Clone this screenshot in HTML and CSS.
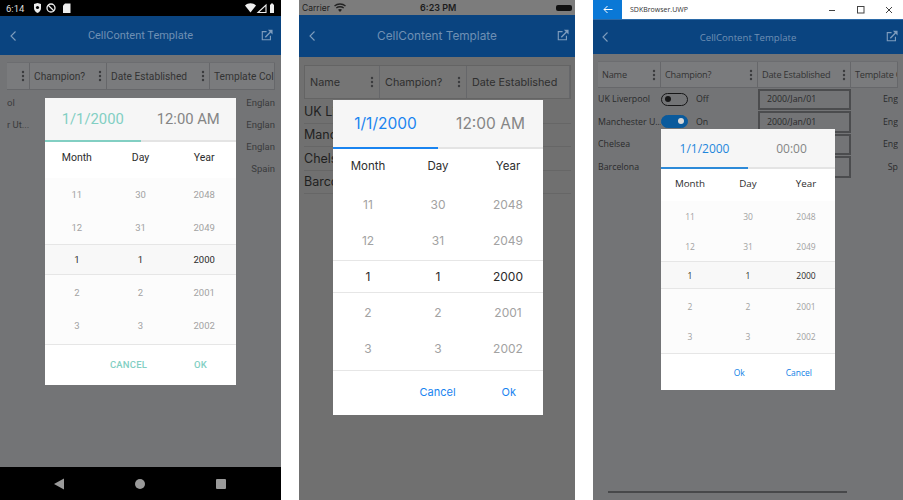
FILE: index.html
```html
<!DOCTYPE html>
<html lang="en">
<head>
<meta charset="utf-8">
<title>CellContent Template</title>
<link rel="stylesheet" href="styles.css">
</head>
<body>
<svg class="defs" aria-hidden="true">
  <symbol id="chev" viewBox="0 0 8 12"><path d="M6.500 1.500 2 6l4.500 4.500" fill="none" stroke="currentColor" stroke-width="1.100"/></symbol>
  <symbol id="ext" viewBox="0 0 14 14"><path d="M6.500 3H1.500v9.500H11V8" fill="none" stroke="currentColor" stroke-width="1.300"/><path d="M5 9.500 11 3.500" fill="none" stroke="currentColor" stroke-width="1.600"/><path d="M8 1h5.500v5.500z" fill="currentColor"/></symbol>
  <symbol id="dots" viewBox="0 0 4 12"><circle cx="2" cy="2" r="1.200" fill="currentColor"/><circle cx="2" cy="6" r="1.200" fill="currentColor"/><circle cx="2" cy="10" r="1.200" fill="currentColor"/></symbol>
</svg>

<section class="phone android">
  <div class="status">
    <span class="clock">6:14</span>
    <svg class="st" width="40" height="12" viewBox="0 0 40 12"><path d="M1 2l3.500-1L8 2v4c0 2.500-1.500 4-3.500 5C2.500 10 1 8.500 1 6z" fill="#eee"/><circle cx="4.500" cy="5.500" r="1.600" fill="#000"/><circle cx="18" cy="6" r="4" fill="none" stroke="#eee" stroke-width="1.300"/><path d="M15 3l6 6" stroke="#eee" stroke-width="1.300"/><path d="M32 1.500h5.500v9.500H30V3.500z" fill="#eee"/></svg>
    <span class="grow"></span>
    <svg class="st" width="31" height="12" viewBox="0 0 31 12"><path d="M0 3.500C3 .5 8 .5 11 3.500L5.500 10.500z" fill="#eee"/><path d="M21 3v7.500h-8z" fill="none" stroke="#eee" stroke-width="1.100"/><path d="M25 2.500h1v-1h2v1h1v8.500h-4z" fill="#eee"/></svg>
  </div>
  <header class="nav">
    <svg class="chev"><use href="#chev"/></svg>
    <span class="title">CellContent Template</span>
    <svg class="ext"><use href="#ext"/></svg>
  </header>
  <main class="content">
    <div class="row head">
      <div class="cell"><span class="grow"></span><svg class="dots"><use href="#dots"/></svg></div>
      <div class="cell">Champion?<span class="grow"></span><svg class="dots"><use href="#dots"/></svg></div>
      <div class="cell">Date Established<span class="grow"></span><svg class="dots"><use href="#dots"/></svg></div>
      <div class="cell">Template Col</div>
    </div>
    <div class="row data"><span class="tail">ol</span><span></span><span></span><span class="r">Englan</span></div>
    <div class="row data"><span class="tail">r Ut...</span><span></span><span></span><span class="r">Englan</span></div>
    <div class="row data"><span></span><span></span><span></span><span class="r">Englan</span></div>
    <div class="row data"><span></span><span></span><span></span><span class="r">Spain</span></div>
  </main>
  <footer class="softkeys">
    <svg width="12" height="14" viewBox="0 0 12 14"><path d="M11 1.500v11L1 7z" fill="#9a9a9a"/></svg>
    <svg width="12" height="12" viewBox="0 0 12 12"><circle cx="6" cy="6" r="5" fill="#9a9a9a"/></svg>
    <svg width="12" height="12" viewBox="0 0 12 12"><rect x="1" y="1" width="10" height="10" rx="1" fill="#9a9a9a"/></svg>
  </footer>
  <div class="dialog">
    <div class="tabs"><span class="on">1/1/2000</span><span>12:00 AM</span></div>
    <div class="bar"><i></i></div>
    <div class="cols labels"><span>Month</span><span>Day</span><span>Year</span></div>
    <div class="picker">
      <div class="cols"><span>11</span><span>30</span><span>2048</span></div>
      <div class="cols"><span>12</span><span>31</span><span>2049</span></div>
      <div class="cols sel"><span>1</span><span>1</span><span>2000</span></div>
      <div class="cols"><span>2</span><span>2</span><span>2001</span></div>
      <div class="cols"><span>3</span><span>3</span><span>2002</span></div>
    </div>
    <div class="actions"><span>CANCEL</span><span>OK</span></div>
  </div>
</section>

<section class="phone ios">
  <div class="status">
    <span>Carrier</span>
    <svg class="st wifi" width="12" height="9" viewBox="0 0 12 9"><path d="M.5 3C3.500.3 8.500.3 11.500 3M2.300 5c2-1.700 5.400-1.700 7.400 0" fill="none" stroke="#222" stroke-width="1.300"/><path d="M4 6.700c1.200-.8 2.800-.8 4 0L6 9z" fill="#222"/></svg>
    <span class="time">6:23 PM</span>
    <span class="batt"></span>
  </div>
  <header class="nav">
    <svg class="chev"><use href="#chev"/></svg>
    <span class="title">CellContent Template</span>
    <svg class="ext"><use href="#ext"/></svg>
  </header>
  <main class="content">
    <div class="row head">
      <div class="cell">Name<span class="grow"></span><svg class="dots"><use href="#dots"/></svg></div>
      <div class="cell">Champion?<span class="grow"></span><svg class="dots"><use href="#dots"/></svg></div>
      <div class="cell">Date Established</div>
    </div>
    <div class="row data"><span>UK Li</span></div>
    <div class="row data"><span>Manc</span></div>
    <div class="row data"><span>Chels</span></div>
    <div class="row data"><span>Barco</span></div>
  </main>
  <div class="dialog">
    <div class="tabs"><span class="on">1/1/2000</span><span>12:00 AM</span></div>
    <div class="bar"><i></i></div>
    <div class="cols labels"><span>Month</span><span>Day</span><span>Year</span></div>
    <div class="picker">
      <div class="cols"><span>11</span><span>30</span><span>2048</span></div>
      <div class="cols"><span>12</span><span>31</span><span>2049</span></div>
      <div class="cols sel"><span>1</span><span>1</span><span>2000</span></div>
      <div class="cols"><span>2</span><span>2</span><span>2001</span></div>
      <div class="cols"><span>3</span><span>3</span><span>2002</span></div>
    </div>
    <div class="actions"><span>Cancel</span><span>Ok</span></div>
  </div>
</section>

<section class="phone uwp">
  <div class="status">
    <span class="back"><svg width="10" height="9" viewBox="0 0 10 9"><path d="M9.500 4.500H1M4.500 1 1 4.500 4.500 8" fill="none" stroke="#fff" stroke-width="1"/></svg></span>
    <span class="app">SDKBrowser.UWP</span>
    <span class="grow"></span>
    <span class="winbtns">
      <svg width="8" height="8" viewBox="0 0 8 8"><path d="M1 4.500h6" stroke="#444"/></svg>
      <svg width="8" height="8" viewBox="0 0 8 8"><rect x=".5" y=".5" width="6.500" height="6.500" fill="none" stroke="#444"/></svg>
      <svg width="8" height="8" viewBox="0 0 8 8"><path d="M1 1l6 6M7 1 1 7" stroke="#444"/></svg>
    </span>
  </div>
  <header class="nav">
    <svg class="chev"><use href="#chev"/></svg>
    <span class="title">CellContent Template</span>
    <svg class="ext"><use href="#ext"/></svg>
  </header>
  <main class="content">
    <div class="row head">
      <div class="cell">Name<span class="grow"></span><svg class="dots"><use href="#dots"/></svg></div>
      <div class="cell">Champion?<span class="grow"></span><svg class="dots"><use href="#dots"/></svg></div>
      <div class="cell">Date Established<span class="grow"></span><svg class="dots"><use href="#dots"/></svg></div>
      <div class="cell">Template C</div>
    </div>
    <div class="row data">
      <span>UK Liverpool</span>
      <span class="toggle"><i class="sw"></i>Off</span>
      <span class="date">2000/Jan/01</span>
      <span class="r">Eng</span>
    </div>
    <div class="row data">
      <span>Manchester U...</span>
      <span class="toggle"><i class="sw onsw"></i>On</span>
      <span class="date">2000/Jan/01</span>
      <span class="r">Eng</span>
    </div>
    <div class="row data"><span>Chelsea</span><span></span><span class="date"></span><span class="r">Eng</span></div>
    <div class="row data"><span>Barcelona</span><span></span><span class="date"></span><span class="r">Sp</span></div>
    <span class="grow"></span>
    <div class="scroll"></div>
  </main>
  <div class="dialog">
    <div class="tabs"><span class="on">1/1/2000</span><span>00:00</span></div>
    <div class="bar"><i></i></div>
    <div class="cols labels"><span>Month</span><span>Day</span><span>Year</span></div>
    <div class="picker">
      <div class="cols"><span>11</span><span>30</span><span>2048</span></div>
      <div class="cols"><span>12</span><span>31</span><span>2049</span></div>
      <div class="cols sel"><span>1</span><span>1</span><span>2000</span></div>
      <div class="cols"><span>2</span><span>2</span><span>2001</span></div>
      <div class="cols"><span>3</span><span>3</span><span>2002</span></div>
    </div>
    <div class="actions"><span>Ok</span><span>Cancel</span></div>
  </div>
</section>
</body>
</html>
```
FILE: styles.css
```css
* { box-sizing: border-box; }
html, body { margin: 0; height: 100%; }
body { display: flex; width: 903px; height: 500px; background: #fff; overflow: hidden; font-family: Roboto, sans-serif; }
.defs { position: absolute; width: 0; height: 0; }
.grow { flex: 1; }

.phone { position: relative; display: flex; flex-direction: column; height: 500px; overflow: hidden; background: #737476; color: #2c2d2e; }
.android { width: 281px; font-family: Roboto, sans-serif; }
.ios { width: 276px; margin-left: 18px; background: #707070; font-family: Inter, "Liberation Sans", sans-serif; }
.uwp { width: 310px; margin-left: 18px; font-family: "Open Sans", sans-serif; }

/* status bars */
.status { display: flex; align-items: center; flex: none; }
.android .status { height: 16px; background: #000; color: #ddd; font-size: 9.500px; padding: 0 5px 0 6px; }
.android .clock { margin-right: 9px; }
.ios .status { position: relative; height: 15px; background: #7c7c7c; color: #1c1c1c; font-size: 8.500px; padding: 0 4px 0 3px; }
.ios .wifi { margin-left: 4px; }
.ios .time { position: absolute; left: 121px; font-size: 9px; font-weight: 600; }
.ios .batt { position: absolute; right: 3px; width: 16px; height: 6px; border-radius: 2px; background: #111; }
.uwp .status { height: 19px; background: #fff; color: #333; font-size: 7px; }
.back { display: flex; align-items: center; justify-content: center; width: 29px; height: 19px; background: #0a78d6; }
.app { margin-left: 8px; }
.winbtns { display: flex; gap: 20.500px; padding-right: 10px; }

/* app bar */
.nav { position: relative; display: flex; align-items: center; justify-content: center; flex: none; background: #0a4480; color: #6f90b4; }
.android .nav { height: 39px; font-size: 11px; }
.ios .nav { height: 42px; font-size: 11.800px; }
.uwp .nav { height: 35px; font-size: 9.600px; border-top: 1px solid #2b6aa8; }
.chev { position: absolute; left: 9px; top: 50%; width: 8px; height: 12px; margin-top: -6px; color: #7f9dbd; }
.ext { position: absolute; right: 8px; top: 50%; width: 12px; height: 12px; margin-top: -7px; color: #7f9dbd; }
.ios .ext { right: 6px; }
.uwp .chev { left: 8px; }
.uwp .ext { right: 5px; }

/* grid behind the dialog */
.content { flex: 1; display: flex; flex-direction: column; min-height: 0; overflow: hidden; }
.android .content { padding: 7px 6px 0 7px; }
.ios .content { padding: 8px 4px 0 5px; }
.uwp .content { padding: 7px 5px 7px 5px; }
.row { display: grid; flex: none; }
.android .row { grid-template-columns: 23px 77px 103px 65px; }
.ios .row { grid-template-columns: 75px 87px 1fr; }
.uwp .row { grid-template-columns: 63px 97px 93px 47px; }
.head { background: #7a7b7d; }
.cell { display: flex; align-items: center; min-width: 0; overflow: hidden; white-space: nowrap; border-right: 1px solid #66676a; }
.android .head { height: 28px; font-size: 10.200px; border-top: 1px solid #6c6d70; border-bottom: 1px solid #66676a; color: #333; }
.android .cell { padding: 0 4px; }
.ios .head { height: 34px; font-size: 10.800px; border: 1px solid #646464; color: #2f2f2f; background: #757575; }
.ios .cell { padding: 0 5px; }
.uwp .head { height: 27px; font-size: 9.200px; border-bottom: 1px solid #66676a; border-top: 1px solid #6c6d70; color: #333; letter-spacing: -.2px; }
.uwp .cell { padding: 0 4px; }
.dots { flex: none; width: 4px; height: 12px; color: #3b3c3e; }

.data { white-space: nowrap; }
.data span { min-width: 0; overflow: hidden; }
.r { text-align: right; }
.android .data { height: 22px; align-items: center; font-size: 9.500px; color: #3a3b3d; }
.android .data:nth-child(2) { margin-top: 1px; }
.ios .data { height: 23.500px; align-items: center; font-size: 12.500px; color: #1f1f1f; border-bottom: 1px solid #666; }
.ios .data:nth-child(2) { margin-top: 1px; }
.uwp .data { height: 22.500px; align-items: center; font-size: 8.800px; color: #2a2b2c; }
.tail { display: block; }
.toggle { display: flex; align-items: center; gap: 8px; }
.sw { position: relative; display: block; width: 27px; height: 13px; border: 1.500px solid #161617; border-radius: 7px; }
.sw::after { content: ""; position: absolute; left: 3px; top: 2px; width: 6px; height: 6px; border-radius: 50%; background: #161617; }
.onsw { background: #0a5a9c; border-color: #0a5a9c; }
.onsw::after { left: auto; right: 3px; background: #d8d8d8; }
.date { display: flex; align-items: center; height: 21.500px; padding-left: 7px; border: 2px solid #4b4c4e; }
.scroll { height: 2px; width: 239px; margin-left: 10px; background: #47484a; }

/* date-time dialog */
.dialog { position: absolute; display: flex; flex-direction: column; background: #fff; color: #333; }
.tabs { display: grid; grid-template-columns: 1fr 1fr; align-items: center; flex: none; background: #f6f6f6; text-align: center; color: #858585; }
.bar { flex: none; background: #e4e4e4; }
.bar i { display: block; height: 100%; width: 50%; }
.cols { display: grid; grid-template-columns: 1fr 1fr 1fr; align-items: center; text-align: center; }
.labels { flex: none; color: #2d2d2d; }
.picker { flex: none; border-bottom: 1px solid #e6e6e6; color: #a2a2a2; }
.sel { color: #2a2a2a; border-top: 1px solid #e6e6e6; border-bottom: 1px solid #e6e6e6; }
.actions { flex: 1; display: flex; align-items: center; justify-content: flex-end; }

.android .dialog { left: 45px; top: 98px; width: 191px; height: 287px; }
.android .tabs { height: 42px; font-size: 14.800px; }
.android .on { color: #82cfc3; }
.android .bar { height: 2px; }
.android .bar i { background: #82cfc3; }
.android .labels { height: 36px; padding-bottom: 6px; font-size: 10.500px; }
.android .picker { background: #fcfcfc; font-size: 9.500px; padding-bottom: 2px; }
.android .picker .cols { height: 33px; }
.android .picker .sel { height: 31px; margin-bottom: 1px; background: #f8f8f8; }
.android .actions { gap: 47px; padding: 0 29px 1px 0; font-size: 9.500px; font-weight: 500; color: #82cfc3; letter-spacing: .2px; }

.ios .dialog { left: 34px; top: 100px; width: 210px; height: 315px; }
.ios .tabs { height: 47px; font-size: 15.500px; }
.ios .on { color: #1a84f0; }
.ios .bar { height: 1.500px; }
.ios .bar i { background: #1a84f0; }
.ios .labels { height: 38px; padding-bottom: 4px; font-size: 11.500px; }
.ios .picker { font-size: 12px; padding-bottom: 3px; }
.ios .picker .cols { height: 36px; }
.ios .picker .sel { height: 33px; margin-bottom: 2px; margin-top: 1px; }
.ios .actions { gap: 46px; padding: 0 27px 1px 0; font-size: 11px; color: #1a84f0; }

.uwp .dialog { left: 68px; top: 129px; width: 174px; height: 261px; }
.uwp .tabs { height: 38px; font-size: 12px; }
.uwp .on { color: #1f86dc; }
.uwp .bar { height: 2px; }
.uwp .bar i { background: #2d8ad8; }
.uwp .labels { height: 32px; padding-bottom: 4px; font-size: 9.800px; }
.uwp .picker { background: #fcfcfc; font-size: 8.500px; padding-bottom: 2px; }
.uwp .picker .cols { height: 30px; }
.uwp .picker .sel { height: 28px; margin-bottom: 2px; background: #f8f8f8; }
.uwp .actions { gap: 41px; padding-right: 23px; font-size: 8.500px; color: #0f7fe6; }

/* Android navigation keys */
.softkeys { display: flex; flex: none; align-items: center; justify-content: space-between; height: 33px; padding: 0 54px 0 53px; background: #000; }
```
